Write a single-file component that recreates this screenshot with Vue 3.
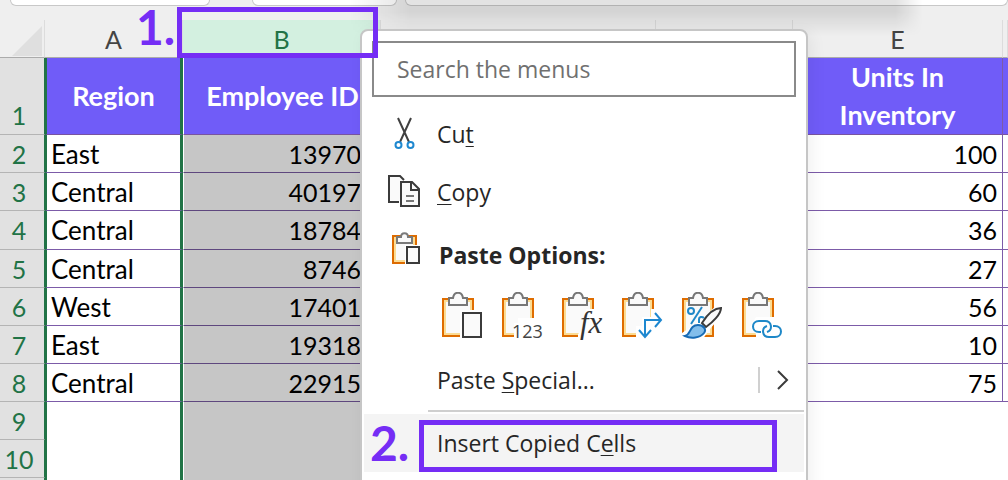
<script setup>
import { ref } from 'vue'

const query = ref('')
const rows = [
  { n: 2, region: 'East', id: '13970', units: 100 },
  { n: 3, region: 'Central', id: '40197', units: 60 },
  { n: 4, region: 'Central', id: '18784', units: 36 },
  { n: 5, region: 'Central', id: '8746', units: 27 },
  { n: 6, region: 'West', id: '17401', units: 56 },
  { n: 7, region: 'East', id: '19318', units: 10 },
  { n: 8, region: 'Central', id: '22915', units: 75 },
  { n: 9 },
  { n: 10 },
  { n: '' },
]
const pasteOptions = [
  { kind: 'all', label: 'Paste' },
  { kind: 'values', label: 'Values' },
  { kind: 'formulas', label: 'Formulas' },
  { kind: 'transpose', label: 'Transpose' },
  { kind: 'formatting', label: 'Formatting' },
  { kind: 'link', label: 'Paste Link' },
]
</script>

<template>
  <main class="app">
    <div class="formula-bar">
      <div class="name-box"></div>
      <div class="fx-box"></div>
      <div class="formula-box"></div>
    </div>

    <table class="sheet">
      <colgroup>
        <col class="c-num"><col class="c-a"><col class="c-b"><col class="c-c"><col class="c-d"><col class="c-e"><col>
      </colgroup>
      <thead>
        <tr class="letters">
          <th class="corner">
            <svg width="30" height="30" viewBox="0 0 30 30"><path d="M30 0V30H0Z" fill="#dfdfdf" /></svg>
          </th>
          <th scope="col">A</th>
          <th scope="col" class="picked">B</th>
          <th scope="col"></th>
          <th scope="col"></th>
          <th scope="col">E</th>
          <th scope="col"></th>
        </tr>
      </thead>
      <tbody>
        <tr class="titles">
          <th scope="row" class="num">1</th>
          <td class="col-a">Region</td>
          <td class="col-b">Employee ID</td>
          <td></td>
          <td></td>
          <td class="ruled">Units In Inventory</td>
          <td></td>
        </tr>
        <tr v-for="r in rows" :key="r.n" :class="{ filled: r.region, taller: r.n === 4 }">
          <th scope="row" class="num">{{ r.n }}</th>
          <td class="col-a">{{ r.region }}</td>
          <td class="col-b">{{ r.id }}</td>
          <td></td>
          <td></td>
          <td class="col-e">{{ r.units }}</td>
          <td></td>
        </tr>
      </tbody>
    </table>
    <div class="panel-shadow"></div>

    <div class="menu">
      <input v-model="query" class="search" type="text" placeholder="Search the menus" aria-label="Search the menus">
      <button class="item" type="button">
        <svg class="icon" width="34" height="34" viewBox="0 0 34 34" fill="none">
          <path d="M10 1 21 25M23 1 12 25" stroke="#404040" stroke-width="2" />
          <circle cx="10.500" cy="28" r="3" stroke="#1e88d0" stroke-width="2" />
          <circle cx="22.500" cy="28" r="3" stroke="#1e88d0" stroke-width="2" />
        </svg>
        <span>Cu<u>t</u></span>
      </button>
      <button class="item" type="button">
        <svg class="icon" width="34" height="34" viewBox="0 0 34 34" fill="none" stroke="#3b3b3b" stroke-width="2">
          <path d="M11 27H1V1H12L16 5" fill="#fafafa" />
          <path d="M13 7H24L31 14V31H13Z" fill="#fafafa" />
          <path d="M23 7V15H31" />
          <path d="M18 21H26M18 26H26" stroke="#777" />
        </svg>
        <span><u>C</u>opy</span>
      </button>
      <div class="item heading">
        <svg class="icon" width="34" height="34" viewBox="0 0 34 34" fill="none">
          <path d="M5 5H28V32H5Z" fill="#fafafa" stroke="#dd6b00" stroke-width="2" />
          <path d="M7 7H26V30H7Z" stroke="#fbdc94" stroke-width="2" />
          <path d="M9 12V6H13C13 1 20 1 20 6H24V12Z" fill="#fafafa" stroke="#7a7a7a" stroke-width="2" />
          <path d="M17 14H34V34H17Z" fill="#fff" />
          <path d="M19 16H31V32H19Z" fill="#fafafa" stroke="#3b3b3b" stroke-width="2" />
        </svg>
        <span>Paste Options:</span>
      </div>
      <div class="options">
        <button v-for="o in pasteOptions" :key="o.kind" type="button" class="option" :aria-label="o.label">
          <svg width="44" height="50" viewBox="0 0 44 50" fill="none">
            <path d="M1 7H31V44H1Z" fill="#fafafa" stroke="#df6d00" stroke-width="2" />
            <path d="M3 9H29V42H3Z" stroke="#fbdc94" stroke-width="2" />
            <path d="M7 13V6H11C12 -1 20 -1 21 6H25V13Z" fill="#fafafa" stroke="#777" stroke-width="2" />
            <template v-if="o.kind === 'all'">
              <path d="M18 18H42V48H18Z" fill="#fff" />
              <path d="M21 21H39V45H21Z" fill="#fafafa" stroke="#3b3b3b" stroke-width="2" />
            </template>
            <template v-else-if="o.kind === 'values'">
              <path d="M16 26H44V48H12V31H16Z" fill="#fff" />
              <text x="10" y="46" class="digits">123</text>
            </template>
            <template v-else-if="o.kind === 'formulas'">
              <path d="M24 17H34V26H44V48H16V42L21 37Z" fill="#fff" />
              <text x="18" y="41" class="fx">fx</text>
            </template>
            <template v-else-if="o.kind === 'transpose'">
              <path d="M29 17H44V48H14V34H20V25H29Z" fill="#fff" />
              <path d="M23 45V28H39M17 38 23 45 29 38M33 21 39 28 33 35" stroke="#1e88d0" stroke-width="2" />
            </template>
            <template v-else-if="o.kind === 'formatting'">
              <path d="M37 11 44 18 28 37 20 48H0V41L19 28Z" fill="#fff" />
              <circle cx="9" cy="19" r="3" stroke="#2088c8" stroke-width="2" />
              <path d="M20 15 9 32" stroke="#2088c8" stroke-width="2" />
              <path d="M17 31V27C17 25 20 24 22 26" stroke="#2088c8" stroke-width="2" />
              <path d="M20 31C25 23 32 16 39 16C39 22 31 30 24 35Z" fill="#fafafa" stroke="#3b3b3b" stroke-width="2" />
              <path d="M3 44C9 43 7 33 16 33C21 33 25 37 22 41C18 46 9 47 3 44Z" fill="#83beeb" stroke="#176bb5" stroke-width="2" />
            </template>
            <template v-else>
              <path d="M14 25H33L44 32V48H14V42L8 35Z" fill="#fff" />
              <path d="M19 40H17C9 40 9 29 17 29H23C30 29 31 38 25 40" stroke="#1e88c8" stroke-width="2" />
              <path d="M31 34H33C41 34 41 45 33 45H27C20 45 19 36 25 34" stroke="#1e88c8" stroke-width="2" />
            </template>
          </svg>
        </button>
      </div>
      <button class="item special" type="button">
        <span>Paste <u>S</u>pecial...</span>
        <svg class="chevron" width="12" height="20" viewBox="0 0 12 20" fill="none">
          <path d="M1 1 10 10 1 19" stroke="#3b3b3b" stroke-width="2" />
        </svg>
      </button>
      <hr>
      <button class="item insert" type="button">
        <span>Insert Copied C<u>e</u>lls</span>
      </button>
    </div>

    <div class="mark mark-column"></div>
    <div class="mark mark-item"></div>
    <strong class="step step-one">1.</strong>
    <strong class="step step-two">2.</strong>
  </main>
</template>

<style>
body { margin: 0; }
</style>

<style scoped>
.app {
  position: relative;
  height: 100vh;
  overflow: hidden;
  background: #fff;
  font-family: Lato, "Open Sans", sans-serif;
}
.formula-bar {
  display: flex;
  height: 20px;
  padding-left: 10px;
  background: #efefef;
}
.formula-bar div {
  box-sizing: border-box;
  height: 6px;
  border: 1px solid #c8c8c8;
  border-top: 0;
  border-radius: 0 0 8px 8px;
  background: #fff;
}
.name-box { width: 200px; }
.fx-box { width: 145px; margin-left: 42px; }
.formula-box { flex: 1; margin-left: 8px; border-right: 0; }
.panel-shadow {
  position: absolute;
  top: 0;
  left: 350px;
  width: 572px;
  height: 36px;
  background: linear-gradient(to right, transparent, rgba(0, 0, 0, 0.11) 60px, rgba(0, 0, 0, 0.11) 546px, transparent);
  mask-image: linear-gradient(to bottom, #000 12px, transparent);
}

.sheet {
  width: 100%;
  table-layout: fixed;
  border-collapse: separate;
  border-spacing: 0;
  font-size: 25px;
}
.c-num { width: 45px; }
.c-a { width: 138px; }
.c-b { width: 198px; }
.c-c { width: 275px; }
.c-d { width: 137px; }
.c-e { width: 210px; }
.sheet th, .sheet td {
  box-sizing: border-box;
  height: 38px;
  padding: 0;
  line-height: 34px;
  white-space: nowrap;
}
.letters th {
  border-right: 1px solid #dcdcdc;
  border-bottom: 1px solid #ababab;
  background: #efefef;
  color: #444;
  font-size: 25px;
  font-weight: 400;
}
.sheet .letters .corner { padding: 4px 2px 0 0; line-height: 0; text-align: right; }
.letters .picked { background: #d3f0e0; color: #217346; }
.sheet .num {
  border-right: 1px solid #217346;
  border-bottom: 1px solid #b4b4b4;
  background: #e1e1e1;
  color: #217346;
  font-weight: 400;
  text-align: center;
  padding-right: 6px;
}
.sheet .col-a {
  padding-left: 4px;
  border-left: 2px solid #217346;
  border-right: 3px solid #217346;
  font-size: 26px;
}
.sheet .col-b {
  padding-right: 20px;
  border-left: 1px solid #fff;
  background: #c6c6c6;
  text-align: right;
}
.sheet .col-e { padding-right: 5px; text-align: right; }
.filled td { border-bottom: 1px solid #7c5ba8; }
.filled .col-b { border-bottom-color: #5e477e; }
.filled .col-e, .sheet .ruled { border-right: 1px solid #7c5ba8; }
.sheet .taller th, .sheet .taller td { height: 39px; }
.sheet .titles th, .sheet .titles td { height: 77px; }
.sheet .titles td {
  border-bottom: 1px solid #7854a0;
  background: #705cf8;
  color: #fff;
  font-size: 27px;
  font-weight: 700;
  line-height: 38px;
  text-align: center;
  white-space: normal;
}
.sheet .titles .num { padding-bottom: 2px; vertical-align: bottom; }
.sheet .titles .col-a, .sheet .titles .col-b { padding-left: 0; padding-right: 0; }
.sheet .titles .ruled { padding: 0 30px; }

.menu {
  position: absolute;
  top: 29px;
  left: 360px;
  box-sizing: border-box;
  display: flex;
  flex-direction: column;
  width: 448px;
  height: 520px;
  padding: 10px 2px;
  border: 2px solid #c6c6c6;
  border-radius: 8px;
  background: #fff;
  box-shadow: 4px 4px 16px rgba(0, 0, 0, 0.06);
  color: #262626;
  font-family: "Open Sans", "Noto Sans", sans-serif;
  font-size: 23px;
}
.search {
  box-sizing: border-box;
  height: 56px;
  margin: 0 8px 8px;
  padding: 0 23px;
  border: 2px solid #8a8a8a;
  border-radius: 0;
  background: #fff;
  color: #262626;
  font: inherit;
  outline: none;
}
.search::placeholder { color: #707070; opacity: 1; }
.item {
  display: flex;
  flex: none;
  align-items: center;
  gap: 15px;
  height: 58px;
  padding: 0 24px;
  border: 0;
  background: transparent;
  color: inherit;
  font: inherit;
  text-align: left;
}
.item u { text-decoration-thickness: 1px; text-underline-offset: 3px; }
.icon { flex: none; }
.heading { height: 67px; gap: 17px; font-weight: 700; }
.heading .icon { margin-bottom: 14px; }
.options { display: flex; gap: 16px; height: 63px; padding: 4px 0 0 78px; box-sizing: border-box; }
.option { width: 44px; height: 50px; padding: 0; border: 0; background: transparent; }
.option svg { display: block; }
.digits { fill: #444; font-family: "Open Sans", sans-serif; font-size: 18px; }
.fx { fill: #333; font-family: "Liberation Serif", serif; font-size: 31px; font-style: italic; }
.special { justify-content: space-between; padding-left: 73px; padding-right: 15px; }
.chevron { box-sizing: content-box; padding: 3px 0 3px 17px; border-left: 2px solid #d0d0d0; }
hr { flex: none; width: auto; height: 2px; margin: 1px 0 2px 64px; border: 0; background: #cfcfcf; }
.insert { padding-left: 73px; background: #f4f4f4; }

.mark { position: absolute; box-sizing: border-box; border: 5px solid #752df5; }
.mark-column { top: 7px; left: 177px; width: 201px; height: 51px; }
.mark-item { top: 420px; left: 419px; width: 358px; height: 52px; }
.step { position: absolute; color: #752df5; font-size: 48px; line-height: 52px; }
.step-one { top: 1px; left: 136px; }
.step-two { top: 417px; left: 370px; }
</style>
